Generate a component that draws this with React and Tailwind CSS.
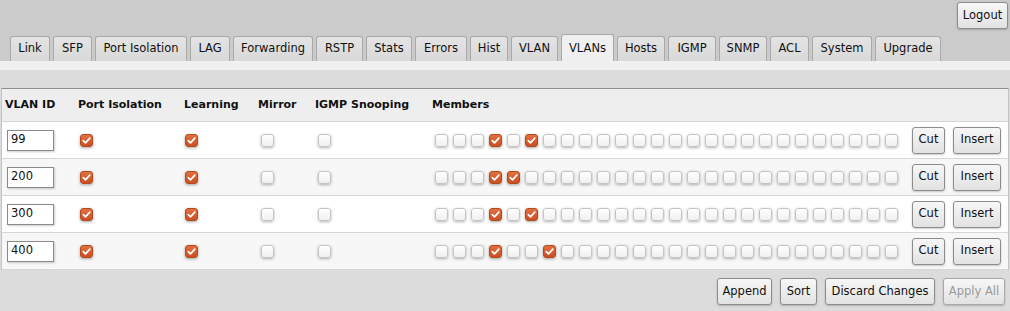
import React from "react";

const tabs = [
  { t: "Link", w: "w-[40px]" },
  { t: "SFP", w: "w-[39px]" },
  { t: "Port Isolation", w: "w-[92px]" },
  { t: "LAG", w: "w-[40px]" },
  { t: "Forwarding", w: "w-[80px]" },
  { t: "RSTP", w: "w-[47px]" },
  { t: "Stats", w: "w-[46px]" },
  { t: "Errors", w: "w-[52px]" },
  { t: "Hist", w: "w-[38px]" },
  { t: "VLAN", w: "w-[47px]" },
  { t: "VLANs", w: "w-[53px]", active: true },
  { t: "Hosts", w: "w-[48px]" },
  { t: "IGMP", w: "w-[48px]" },
  { t: "SNMP", w: "w-[48px]" },
  { t: "ACL", w: "w-[39px]" },
  { t: "System", w: "w-[60px]" },
  { t: "Upgrade", w: "w-[66px]" },
];

const rows = [
  { id: "99", members: [3, 5] },
  { id: "200", members: [3, 4] },
  { id: "300", members: [3, 5] },
  { id: "400", members: [3, 6] },
];

function Box({ checked }) {
  if (checked) {
    return (
      <span className="flex h-[13px] w-[13px] shrink-0 items-center justify-center rounded-[3px] border border-[#b14a20] bg-gradient-to-b from-[#e2703f] to-[#c94f22] shadow-[0_1px_3px_rgba(0,0,0,0.35)]">
        <svg width="11" height="11" viewBox="0 0 11 11">
          <polyline points="2.3,5.6 4.5,7.8 8.8,3.2" fill="none" stroke="#ffffff" strokeWidth="1.7" strokeLinecap="round" strokeLinejoin="round" />
        </svg>
      </span>
    );
  }
  return (
    <span className="block h-[13px] w-[13px] shrink-0 rounded-[3px] border border-[#c4c4c4] bg-gradient-to-b from-[#ffffff] to-[#f0f0f0] shadow-[0_1px_3px_rgba(0,0,0,0.3)]" />
  );
}

function Btn({ children, w, disabled }) {
  return (
    <button
      className={
        "flex h-[27px] items-center justify-center rounded-[3px] border bg-gradient-to-b from-[#f7f7f7] to-[#e2e2e2] text-[11.5px] shadow-[0_1px_2px_rgba(0,0,0,0.2)] " +
        w +
        (disabled ? " border-[#a8a8a8] text-[#9a9a9a]" : " border-[#8c8c8c] text-[#111]")
      }
    >
      {children}
    </button>
  );
}

export default function App() {
  return (
    <div
      className="flex h-[311px] w-[1010px] flex-col overflow-hidden bg-[#dcdcdc] text-[#111]"
      style={{ fontFamily: '"DejaVu Sans", Verdana, sans-serif' }}
    >
      <div className="flex flex-col bg-[#cbcbcb]">
        <div className="flex justify-end pr-[2px] pt-[2px]">
          <Btn w="w-[51px] h-[26px]">Logout</Btn>
        </div>
        <div className="flex h-[32px] items-end gap-[3px] pl-[10px]">
          {tabs.map((tab) =>
            tab.active ? (
              <div
                key={tab.t}
                className={"flex h-[27px] items-center justify-center rounded-t-[3px] border border-b-0 border-[#a9a9a9] bg-[#f0f0f0] pt-[2px] text-[11.5px] " + tab.w}
              >
                {tab.t}
              </div>
            ) : (
              <div
                key={tab.t}
                className={"flex h-[25px] items-center justify-center rounded-t-[3px] border border-b-0 border-[#a9a9a9] bg-gradient-to-b from-[#e4e4e4] to-[#d8d8d8] text-[11.5px] " + tab.w}
              >
                {tab.t}
              </div>
            )
          )}
        </div>
      </div>
      <div className="h-[9px] bg-[#f0f0f0]" />
      <div className="h-[18px] bg-[#dcdcdc]" />
      <div className="mx-[1px] border-x border-t border-x-[#c4c4c4] border-t-[#8f8f8f]">
        <div className="flex h-[33px] items-center border-b border-[#d6d6d6] bg-[#eeeeee] text-[11px] font-bold">
          <div className="w-[73px] pl-[3px]">VLAN ID</div>
          <div className="w-[106px] pl-[3px]">Port Isolation</div>
          <div className="w-[74px] pl-[3px]">Learning</div>
          <div className="w-[57px] pl-[3px]">Mirror</div>
          <div className="w-[117px] pl-[3px]">IGMP Snooping</div>
          <div className="pl-[3px]">Members</div>
        </div>
        {rows.map((r, i) => (
          <div
            key={r.id}
            className={"flex h-[37px] items-center border-b border-[#d6d6d6] " + (i % 2 === 0 ? "bg-white" : "bg-[#f7f7f7]")}
          >
            <div className="w-[73px] pl-[5px]">
              <div className="flex h-[21px] w-[47px] items-center border border-[#8a8a8a] bg-white pl-[3px] text-[11.5px] shadow-[1px_1px_2px_rgba(0,0,0,0.2)]">
                {r.id}
              </div>
            </div>
            <div className="w-[106px] pl-[5px]">
              <Box checked />
            </div>
            <div className="w-[74px] pl-[4px]">
              <Box checked />
            </div>
            <div className="w-[57px] pl-[6px]">
              <Box />
            </div>
            <div className="w-[117px] pl-[6px]">
              <Box />
            </div>
            <div className="flex w-[480px] gap-[5px] pl-[6px]">
              {Array.from({ length: 26 }).map((_, k) => (
                <Box key={k} checked={r.members.includes(k)} />
              ))}
            </div>
            <div className="flex gap-[8px] pl-[3px]">
              <Btn w="w-[33px]">Cut</Btn>
              <Btn w="w-[48px]">Insert</Btn>
            </div>
          </div>
        ))}
      </div>
      <div className="mt-[8px] flex justify-end gap-[8px] pr-[5px]">
        <Btn w="w-[55px]">Append</Btn>
        <Btn w="w-[37px]">Sort</Btn>
        <Btn w="w-[110px]">Discard Changes</Btn>
        <Btn w="w-[62px]" disabled>Apply All</Btn>
      </div>
    </div>
  );
}
